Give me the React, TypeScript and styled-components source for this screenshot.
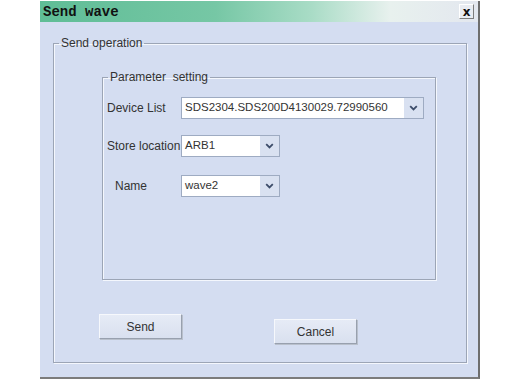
import React from "react";
import styled, { createGlobalStyle } from "styled-components";

const GlobalStyle = createGlobalStyle`
  html, body {
    margin: 0;
    padding: 0;
    background: #ffffff;
  }
  body {
    font-family: "Liberation Sans", Arial, sans-serif;
    font-size: 12px;
    color: #333333;
  }
`;

const Page = styled.div`
  padding: 1px 0 0 40px;
`;

const Window = styled.div`
  width: 438px;
  height: 376px;
  background: #d4ddf1;
  border-right: 2px solid #6e6e6e;
  border-bottom: 2px solid #7c7c7c;
  display: flex;
  flex-direction: column;
`;

const TitleBar = styled.div`
  height: 21px;
  display: flex;
  align-items: center;
  justify-content: space-between;
  padding: 0 4px 0 3px;
  background: linear-gradient(
    to right,
    #5fbd96 0%,
    #76c7a5 40%,
    #a9dcc6 62%,
    #e8f1ee 80%,
    #e3e7ef 100%
  );
`;

const Title = styled.span`
  font-family: "Liberation Mono", "Courier New", monospace;
  font-weight: bold;
  font-size: 14px;
  color: #111;
`;

const CloseButton = styled.div`
  width: 13px;
  height: 13px;
  display: flex;
  align-items: center;
  justify-content: center;
  background: #e9ecf2;
  border: 1px solid #ffffff;
  border-right-color: #7d7d7d;
  border-bottom-color: #7d7d7d;
  font-family: "DejaVu Sans", sans-serif;
  font-weight: bold;
  font-size: 12px;
  line-height: 1;
  color: #111;
`;

const Body = styled.div`
  padding: 14px 0 0 13px;
`;

const GroupBox = styled.fieldset<{ $w: number; $h: number }>`
  box-sizing: border-box;
  width: ${(p) => p.$w}px;
  height: ${(p) => p.$h}px;
  margin: 0;
  padding: 0;
  border: 1px solid #9ca5b6;
  box-shadow: inset 1px 1px 0 #f4f7fd, 1px 1px 0 #f4f7fd;
  min-width: 0;
`;

const Legend = styled.legend`
  margin-left: 5px;
  padding: 0 2px;
  line-height: 14px;
  color: #333;
  white-space: pre;
`;

const InnerWrap = styled.div`
  padding: 20px 0 0 48px;
`;

const Rows = styled.div`
  display: flex;
  flex-direction: column;
  padding: 13px 0 0 4px;
`;

const Row = styled.div<{ $gap: number }>`
  display: flex;
  align-items: center;
  margin-top: ${(p) => p.$gap}px;
`;

const Label = styled.span<{ $indent: number }>`
  width: ${(p) => 74 - p.$indent}px;
  padding-left: ${(p) => p.$indent}px;
  white-space: nowrap;
`;

const Combo = styled.div<{ $w: number }>`
  box-sizing: border-box;
  width: ${(p) => p.$w}px;
  height: 22px;
  display: flex;
  background: #ffffff;
  border: 1px solid #9eabc2;
`;

const ComboText = styled.span`
  flex: 1;
  padding: 0 0 0 3px;
  font-size: 11.5px;
  line-height: 19px;
  color: #333;
  white-space: nowrap;
  overflow: hidden;
`;

const ComboButton = styled.span`
  width: 19px;
  display: flex;
  align-items: center;
  justify-content: center;
  background: #d9e1f1;
`;

const ButtonRow = styled.div`
  display: flex;
  align-items: flex-start;
  gap: 92px;
  padding: 34px 0 0 45px;
`;

const Button = styled.div<{ $drop: number }>`
  box-sizing: border-box;
  width: 83px;
  height: 25px;
  margin-top: ${(p) => p.$drop}px;
  display: flex;
  align-items: center;
  justify-content: center;
  background: linear-gradient(#e6ebf6, #d9e0ef);
  border: 1px solid #f6f8fc;
  border-right-color: #98a0ae;
  border-bottom-color: #98a0ae;
  box-shadow: 1px 1px 0 #b9c0cc;
  color: #333;
`;

function Chevron() {
  return (
    <svg width="9" height="6" viewBox="0 0 9 6">
      <polyline
        points="1.2,1.2 4.5,4.5 7.8,1.2"
        fill="none"
        stroke="#3d4d6a"
        strokeWidth="1.8"
      />
    </svg>
  );
}

function Select({ value, width }: { value: string; width: number }) {
  return (
    <Combo $w={width}>
      <ComboText>{value}</ComboText>
      <ComboButton>
        <Chevron />
      </ComboButton>
    </Combo>
  );
}

export default function App() {
  return (
    <>
      <GlobalStyle />
      <Page>
        <Window>
          <TitleBar>
            <Title>Send wave</Title>
            <CloseButton>x</CloseButton>
          </TitleBar>
          <Body>
            <GroupBox $w={414} $h={327}>
              <Legend>Send operation</Legend>
              <InnerWrap>
                <GroupBox $w={334} $h={210}>
                  <Legend>{"Parameter  setting"}</Legend>
                  <Rows>
                    <Row $gap={0}>
                      <Label $indent={0}>Device List</Label>
                      <Select value="SDS2304.SDS200D4130029.72990560" width={243} />
                    </Row>
                    <Row $gap={16}>
                      <Label $indent={0}>Store location</Label>
                      <Select value="ARB1" width={99} />
                    </Row>
                    <Row $gap={18}>
                      <Label $indent={8}>Name</Label>
                      <Select value="wave2" width={99} />
                    </Row>
                  </Rows>
                </GroupBox>
              </InnerWrap>
              <ButtonRow>
                <Button $drop={0}>Send</Button>
                <Button $drop={5}>Cancel</Button>
              </ButtonRow>
            </GroupBox>
          </Body>
        </Window>
      </Page>
    </>
  );
}
